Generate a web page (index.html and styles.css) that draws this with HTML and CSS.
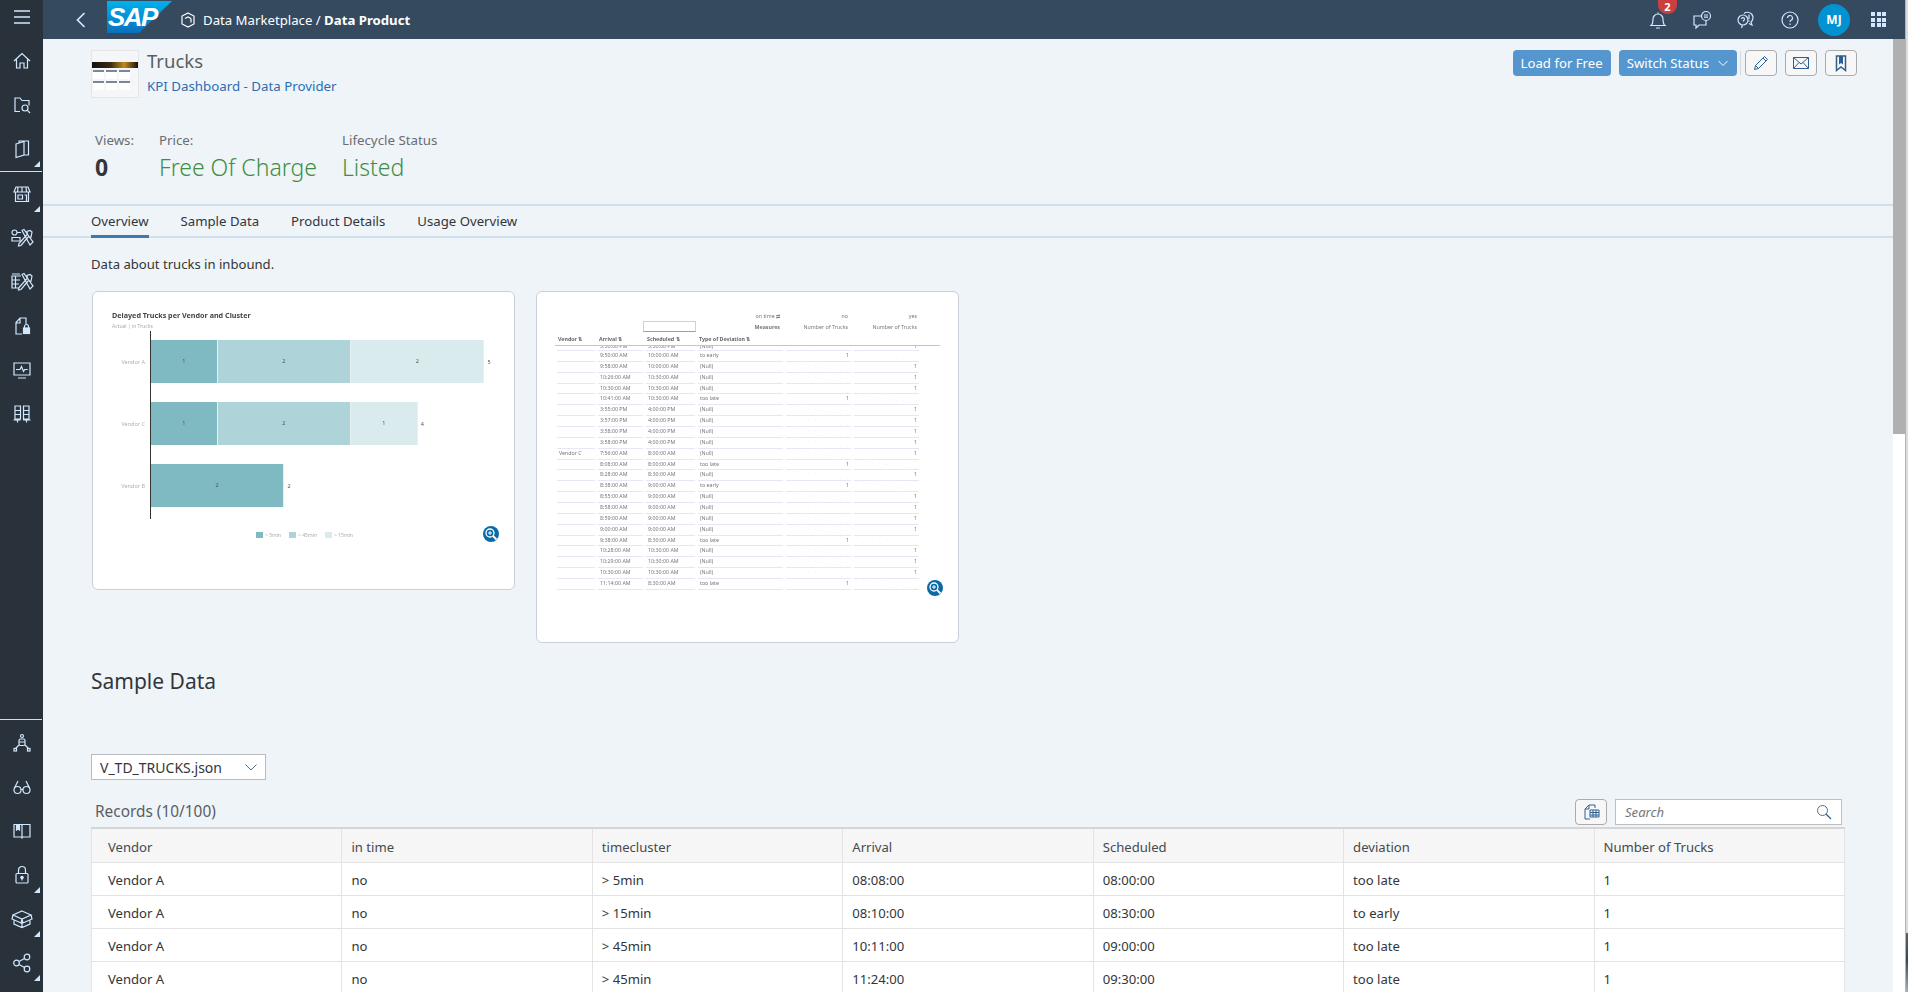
FILE: index.html
```html
<!DOCTYPE html>
<html lang="en">
<head>
    <meta charset="UTF-8">
    <meta name="viewport" content="width=device-width, initial-scale=1.0">
    <title>Data Marketplace / Data Product</title>
    <link rel="stylesheet" href="styles.css">
</head>
<body>
<div class="app">

    <!-- left navigation -->
    <nav class="side">
        <div class="side-top">
            <svg class="ico" width="20" height="20" viewBox="0 0 20 20"><path d="M2 4h16M2 10h16M2 16h16" stroke-width="1.6"/></svg>
        </div>
        <div class="side-item"><svg class="ico" width="20" height="20" viewBox="0 0 20 20"><path d="M2 10l8-7.500L18 10M4.500 8.500V17H8v-5h4v5h3.500V8.500"/></svg></div>
        <div class="side-item"><svg class="ico" width="20" height="20" viewBox="0 0 20 20"><path d="M8 16.500H3V3h5l2 2.500h7v5"/><circle cx="13" cy="13" r="3"/><path d="M15.200 15.200L18 18"/></svg></div>
        <div class="side-item more"><svg class="ico" width="20" height="20" viewBox="0 0 20 20"><path d="M4 5l8-2.500V16l-8 2.500zM7 3.500V2h9.500v14H12"/></svg></div>
        <div class="side-sep"></div>
        <div class="side-item more"><svg class="ico" width="20" height="20" viewBox="0 0 20 20"><path d="M4 3h12l2 5H2zM6 3L5.500 8M10 3v5M14 3l.5 5M3.500 8v9.500h13V8M6 11h4.500v4H6zM12.500 11h2v6.500"/></svg></div>
        <div class="side-item"><svg class="ico" width="24" height="20" viewBox="0 0 24 20"><circle cx="4.500" cy="4.500" r="2.500"/><path d="M7 4.500h4M2 9.500h8v3.500H2z"/><path d="M12 2.500l2-1 9 12.500-3 3zM22 4l-2-1.500-3 1 .5 2.500L9 15.500l-.5 2.500 2.500-.5 7.500-9 2.500.5z"/></svg></div>
        <div class="side-item"><svg class="ico" width="24" height="20" viewBox="0 0 24 20"><path d="M9 16H2V4h9M2 2h8M2 8h8M2 12h7M5.500 4v12"/><path d="M12 2.500l2-1 9 12.500-3 3zM22 4l-2-1.500-3 1 .5 2.500L9 15.500l-.5 2.500 2.500-.5 7.500-9 2.500.5z"/></svg></div>
        <div class="side-item"><svg class="ico" width="20" height="20" viewBox="0 0 20 20"><path d="M10 18H4V6.500L8 2h6v6M8 2v5H4"/><rect x="11.500" y="12" width="6" height="5.500" fill="#d1e8ff"/><path d="M12.500 12v-1.500a2 2 0 0 1 4 0V12"/></svg></div>
        <div class="side-item"><svg class="ico" width="20" height="20" viewBox="0 0 20 20"><path d="M2 3h16v12H2zM6 18h8M4 9.500h4l1.500-3 2 5 1.200-2h3"/></svg></div>
        <div class="side-item"><svg class="ico" width="20" height="20" viewBox="0 0 20 20"><path d="M3 2h5.500v13H3zM11.500 2H17v13h-5.500zM3 6.500h5.500M3 10.500h5.500M11.500 6.500H17M11.500 10.500H17M1.500 16h7M11 16h7.500M5.500 15v3.500M14.500 15v3.500"/></svg></div>

        <div class="side-sep side-bottom"></div>
        <div class="side-item"><svg class="ico" width="20" height="20" viewBox="0 0 20 20"><circle cx="10" cy="3" r="1.500"/><rect x="7" y="6" width="6" height="6.500" rx="1.500"/><path d="M7 9h6M7 12l-3.500 3.500M13 12l3.500 3.500"/><rect x="2" y="15.500" width="2.500" height="2.500"/><rect x="15.500" y="15.500" width="2.500" height="2.500"/></svg></div>
        <div class="side-item"><svg class="ico" width="20" height="20" viewBox="0 0 20 20"><circle cx="5.500" cy="13" r="3.500"/><circle cx="14.500" cy="13" r="3.500"/><path d="M9 12.500h2M2.500 11L6 4M17.500 11L14 4"/></svg></div>
        <div class="side-item"><svg class="ico" width="20" height="20" viewBox="0 0 20 20"><path d="M2 3.500h7.500l.5 1 .5-1H18V16h-7.500l-.5 1-.5-1H2zM10 4.500V17"/><path d="M4.500 3.500V9l1.500-1.200L7.500 9V3.500" fill="#d1e8ff"/></svg></div>
        <div class="side-item more"><svg class="ico" width="20" height="20" viewBox="0 0 20 20"><rect x="4" y="8.500" width="12" height="9.500" rx="1"/><path d="M6.500 8.500V5a3.500 3.500 0 0 1 7 0v3.500"/><circle cx="10" cy="12.500" r="1.200" fill="#d1e8ff"/><path d="M10 13v2.500"/></svg></div>
        <div class="side-item more"><svg class="ico" width="22" height="20" viewBox="0 0 22 20"><path d="M11 2l9 4-9 4-9-4zM11 6l0 0M2 6l-1 4 9 4 1-4 1 4 9-4-1-4M3 11.500V15l8 3.500 8-3.500v-3.500M11 10v8.500"/></svg></div>
        <div class="side-item more"><svg class="ico" width="20" height="20" viewBox="0 0 20 20"><circle cx="4.500" cy="10" r="2.800"/><circle cx="15" cy="4" r="2.800"/><circle cx="15" cy="16" r="2.800"/><path d="M7 8.500l5.500-3M7 11.500l5.500 3"/></svg></div>
    </nav>

    <div class="main">

        <!-- shell bar -->
        <header class="shell">
            <svg class="back" width="12" height="18" viewBox="0 0 12 18"><path d="M9.500 2L2.500 9l7 7" fill="none" stroke="#d1e8ff" stroke-width="1.700"/></svg>
            <svg class="logo" width="65" height="32" viewBox="0 0 65 32">
                <defs><linearGradient id="sapblue" x1="0" y1="0" x2="0" y2="1"><stop offset="0" stop-color="#00b1eb"/><stop offset="1" stop-color="#0a6fbe"/></linearGradient></defs>
                <polygon points="0,0 65,0 32,32 0,32" fill="url(#sapblue)"/>
                <text x="1" y="25" class="logo-text">SAP</text>
            </svg>
            <svg class="cube ico" width="16" height="16" viewBox="0 0 16 16"><path d="M8 1l6 3v8l-6 3-6-3V4zM5 6.500L8 5l3 1.500M11 6.500v4" stroke="#fff"/></svg>
            <div class="shell-title">Data Marketplace / <b>Data Product</b></div>
            <div class="shell-icons">
                <div class="shell-btn">
                    <svg class="ico" width="20" height="20" viewBox="0 0 20 20"><path d="M3 15.500c2-1.500 2-3 2-6.500a5 5 0 0 1 10 0c0 3.500 0 5 2 6.500zM8 18h4M10 2.500V4"/></svg>
                    <span class="badge">2</span>
                </div>
                <div class="shell-btn"><svg class="ico" width="20" height="20" viewBox="0 0 20 20"><path d="M10 6H2v9h2v3l3-3h7v-4"/><circle cx="14" cy="6" r="4.500"/><path d="M12 5h4M12 7.200h4"/></svg></div>
                <div class="shell-btn"><svg class="ico" width="20" height="20" viewBox="0 0 20 20"><circle cx="7" cy="10" r="5"/><path d="M5.500 18l1-3M5.500 9a1.500 1.500 0 1 1 2 1.500v1M8 3.500A5 5 0 1 1 15 12l1 3-3-1.500M13 4.500V9M13 10.500v1"/></svg></div>
                <div class="shell-btn"><svg class="ico" width="20" height="20" viewBox="0 0 20 20"><circle cx="10" cy="10" r="8"/><path d="M7.500 8a2.500 2.500 0 1 1 3.500 2.300c-.7.300-1 .8-1 1.700M10 13.500v1.500"/></svg></div>
                <div class="avatar">MJ</div>
                <div class="shell-btn grid-btn">
                    <span></span><span></span><span></span><span></span><span></span><span></span><span></span><span></span><span></span>
                </div>
            </div>
        </header>

        <div class="body">
            <div class="content">

                <section class="head">
                    <div class="head-top">
                        <div class="thumb">
                            <div class="thumb-band"></div>
                            <div class="thumb-cards"><i></i><i></i><i></i><i></i><i></i><i></i></div>
                        </div>
                        <div class="head-text">
                            <div class="product-name">Trucks</div>
                            <a class="product-link">KPI Dashboard - Data Provider</a>
                        </div>
                        <div class="actions">
                            <button class="btn">Load for Free</button>
                            <button class="btn">Switch Status
                                <svg width="12" height="12" viewBox="0 0 12 12"><path d="M1.500 4l4.500 4.500L10.500 4" fill="none" stroke="#fff"/></svg>
                            </button>
                            <span class="actions-sep"></span>
                            <button class="btn-icon"><svg width="18" height="18" viewBox="0 0 18 18"><path d="M2.500 15.500l1-4L12.500 2.500l3 3-9 9zM3.500 11.500l3 3M11 4l3 3" fill="none" stroke="#2f5f8f"/></svg></button>
                            <button class="btn-icon"><svg width="18" height="18" viewBox="0 0 18 18"><path d="M1.500 3.500h15v11h-15zM1.500 3.500L9 10l7.500-6.500M1.500 14.500l5.500-6M16.500 14.500L11 8.500" fill="none" stroke="#2f5f8f"/></svg></button>
                            <button class="btn-icon"><svg width="18" height="18" viewBox="0 0 18 18"><path d="M4.500 2h9v14.500L9 13l-4.500 3.500z" fill="none" stroke="#2f5f8f" stroke-width="1.500"/><path d="M7 2v8.500l2-1.500 2 1.500V2" fill="#2f5f8f"/></svg></button>
                        </div>
                    </div>
                    <div class="stats">
                        <div class="stat stat-views"><div class="stat-label">Views:</div><div class="stat-value bold">0</div></div>
                        <div class="stat stat-price"><div class="stat-label">Price:</div><div class="stat-value green">Free Of Charge</div></div>
                        <div class="stat"><div class="stat-label">Lifecycle Status</div><div class="stat-value green">Listed</div></div>
                    </div>
                </section>

                <div class="tabs">
                    <div class="tab active">Overview</div>
                    <div class="tab">Sample Data</div>
                    <div class="tab">Product Details</div>
                    <div class="tab">Usage Overview</div>
                </div>

                <section class="overview">
                    <p class="desc">Data about trucks in inbound.</p>

                    <div class="cards">
                        <!-- chart preview -->
                        <div class="card card-chart">
                            <div class="soft">
                                <div class="chart-title">Delayed Trucks per Vendor and Cluster</div>
                                <div class="chart-sub">Actual | in Trucks</div>
                                <div class="chart">
                                    <div class="chart-row">
                                        <span class="chart-label">Vendor A</span>
                                        <span class="seg s1 w1">1</span><span class="seg s2 w2">2</span><span class="seg s3 w2">2</span><span class="total">5</span>
                                    </div>
                                    <div class="chart-row">
                                        <span class="chart-label">Vendor C</span>
                                        <span class="seg s1 w1">1</span><span class="seg s2 w2">2</span><span class="seg s3 w1">1</span><span class="total">4</span>
                                    </div>
                                    <div class="chart-row">
                                        <span class="chart-label">Vendor B</span>
                                        <span class="seg s1 w2">2</span><span class="total">2</span>
                                    </div>
                                </div>
                                <div class="legend">
                                    <span><i class="s1"></i>&gt; 5min</span>
                                    <span><i class="s2"></i>&gt; 45min</span>
                                    <span><i class="s3"></i>&gt; 15min</span>
                                </div>
                            </div>
                            <div class="zoom-btn zoom-chart"><svg width="16" height="16" viewBox="0 0 16 16"><circle cx="7" cy="7" r="4" fill="none" stroke="#fff" stroke-width="1.300"/><path d="M5 7h4M7 5v4" stroke="#fff"/><path d="M10 10l3.500 3.500" stroke="#fff" stroke-width="1.800"/></svg></div>
                        </div>

                        <!-- table preview -->
                        <div class="card card-table">
                            <div class="soft">
                                <div class="mini-top">
                                    <span class="mini-input"></span>
                                    <span class="mini-hd mini-a"><i>on time ⇄</i><b>Measures</b></span>
                                    <span class="mini-hd mini-b"><i>no</i><i>Number of Trucks</i></span>
                                    <span class="mini-hd mini-c"><i>yes</i><i>Number of Trucks</i></span>
                                </div>
                                <div class="mini-row mini-head"><b>Vendor ⇅</b><b>Arrival ⇅</b><b>Scheduled ⇅</b><b>Type of Deviation ⇅</b><b></b><b></b></div>
                                <div class="mini-row cut"><span></span><span>3:50:00 PM</span><span>3:30:00 PM</span><span>(Null)</span><span class="e"></span><span class="n">1</span></div>
                                <div class="mini-row"><span></span><span>9:50:00 AM</span><span>10:00:00 AM</span><span>to early</span><span class="n">1</span><span class="e"></span></div>
                                <div class="mini-row"><span></span><span>9:58:00 AM</span><span>10:00:00 AM</span><span>(Null)</span><span class="e"></span><span class="n">1</span></div>
                                <div class="mini-row"><span></span><span>10:26:00 AM</span><span>10:30:00 AM</span><span>(Null)</span><span class="e"></span><span class="n">1</span></div>
                                <div class="mini-row"><span></span><span>10:30:00 AM</span><span>10:30:00 AM</span><span>(Null)</span><span class="e"></span><span class="n">1</span></div>
                                <div class="mini-row"><span></span><span>10:41:00 AM</span><span>10:30:00 AM</span><span>too late</span><span class="n">1</span><span class="e"></span></div>
                                <div class="mini-row"><span></span><span>3:55:00 PM</span><span>4:00:00 PM</span><span>(Null)</span><span class="e"></span><span class="n">1</span></div>
                                <div class="mini-row"><span></span><span>3:57:00 PM</span><span>4:00:00 PM</span><span>(Null)</span><span class="e"></span><span class="n">1</span></div>
                                <div class="mini-row"><span></span><span>3:58:00 PM</span><span>4:00:00 PM</span><span>(Null)</span><span class="e"></span><span class="n">1</span></div>
                                <div class="mini-row"><span></span><span>3:58:00 PM</span><span>4:00:00 PM</span><span>(Null)</span><span class="e"></span><span class="n">1</span></div>
                                <div class="mini-row"><span>Vendor C</span><span>7:56:00 AM</span><span>8:00:00 AM</span><span>(Null)</span><span class="e"></span><span class="n">1</span></div>
                                <div class="mini-row"><span></span><span>8:08:00 AM</span><span>8:00:00 AM</span><span>too late</span><span class="n">1</span><span class="e"></span></div>
                                <div class="mini-row"><span></span><span>8:28:00 AM</span><span>8:30:00 AM</span><span>(Null)</span><span class="e"></span><span class="n">1</span></div>
                                <div class="mini-row"><span></span><span>8:38:00 AM</span><span>9:00:00 AM</span><span>to early</span><span class="n">1</span><span class="e"></span></div>
                                <div class="mini-row"><span></span><span>8:55:00 AM</span><span>9:00:00 AM</span><span>(Null)</span><span class="e"></span><span class="n">1</span></div>
                                <div class="mini-row"><span></span><span>8:58:00 AM</span><span>9:00:00 AM</span><span>(Null)</span><span class="e"></span><span class="n">1</span></div>
                                <div class="mini-row"><span></span><span>8:59:00 AM</span><span>9:00:00 AM</span><span>(Null)</span><span class="e"></span><span class="n">1</span></div>
                                <div class="mini-row"><span></span><span>9:00:00 AM</span><span>9:00:00 AM</span><span>(Null)</span><span class="e"></span><span class="n">1</span></div>
                                <div class="mini-row"><span></span><span>9:38:00 AM</span><span>8:30:00 AM</span><span>too late</span><span class="n">1</span><span class="e"></span></div>
                                <div class="mini-row"><span></span><span>10:28:00 AM</span><span>10:30:00 AM</span><span>(Null)</span><span class="e"></span><span class="n">1</span></div>
                                <div class="mini-row"><span></span><span>10:29:00 AM</span><span>10:30:00 AM</span><span>(Null)</span><span class="e"></span><span class="n">1</span></div>
                                <div class="mini-row"><span></span><span>10:30:00 AM</span><span>10:30:00 AM</span><span>(Null)</span><span class="e"></span><span class="n">1</span></div>
                                <div class="mini-row"><span></span><span>11:14:00 AM</span><span>8:30:00 AM</span><span>too late</span><span class="n">1</span><span class="e"></span></div>
                            </div>
                            <div class="zoom-btn zoom-table"><svg width="16" height="16" viewBox="0 0 16 16"><circle cx="7" cy="7" r="4" fill="none" stroke="#fff" stroke-width="1.300"/><path d="M5 7h4M7 5v4" stroke="#fff"/><path d="M10 10l3.500 3.500" stroke="#fff" stroke-width="1.800"/></svg></div>
                        </div>
                    </div>
                </section>

                <section class="sample">
                    <h2 class="sample-title">Sample Data</h2>
                    <div class="select">
                        <span>V_TD_TRUCKS.json</span>
                        <svg width="14" height="14" viewBox="0 0 14 14"><path d="M1.500 4.500L7 10l5.500-5.500" fill="none" stroke="#4f6f8f"/></svg>
                    </div>
                    <div class="records-bar">
                        <div class="records-title">Records (10/100)</div>
                        <button class="btn-icon btn-small"><svg width="20" height="20" viewBox="0 0 20 20"><path d="M8 3h6v3M8 3L4 7v10h5M4 7h4V3" fill="none" stroke="#2f5f8f"/><path d="M9 8h9v7H9zM9 10.500h9M9 13h9M12 8v7M15 8v7" fill="none" stroke="#2f5f8f"/></svg></button>
                        <div class="search">
                            <span>Search</span>
                            <svg width="16" height="16" viewBox="0 0 16 16"><circle cx="6.500" cy="6.500" r="5" fill="none" stroke="#4f6f8f"/><path d="M10 10l5 5" stroke="#2f5f8f" stroke-width="1.300"/></svg>
                        </div>
                    </div>
                    <table class="records">
                        <thead>
                            <tr><th>Vendor</th><th>in time</th><th>timecluster</th><th>Arrival</th><th>Scheduled</th><th>deviation</th><th>Number of Trucks</th></tr>
                        </thead>
                        <tbody>
                            <tr><td>Vendor A</td><td>no</td><td>&gt; 5min</td><td>08:08:00</td><td>08:00:00</td><td>too late</td><td>1</td></tr>
                            <tr><td>Vendor A</td><td>no</td><td>&gt; 15min</td><td>08:10:00</td><td>08:30:00</td><td>to early</td><td>1</td></tr>
                            <tr><td>Vendor A</td><td>no</td><td>&gt; 45min</td><td>10:11:00</td><td>09:00:00</td><td>too late</td><td>1</td></tr>
                            <tr><td>Vendor A</td><td>no</td><td>&gt; 45min</td><td>11:24:00</td><td>09:30:00</td><td>too late</td><td>1</td></tr>
                        </tbody>
                    </table>
                </section>
            </div>

            <div class="scroll"><div class="scroll-thumb"></div></div>
        </div>
    </div>

    <div class="edge"></div>
</div>
</body>
</html>
```

FILE: styles.css
```css
* {
    box-sizing: border-box;
}
html, body {
    margin: 0;
    height: 100%;
    overflow: hidden;
}
body {
    background-color: #eff4f9;
    color: #32363a;
    font-family: "Noto Sans", "Open Sans", Arial, sans-serif;
    font-size: 13.100px;
}
.app {
    display: flex;
    height: 100vh;
}
.ico {
    fill: none;
    stroke: #d1e8ff;
    stroke-width: 1.200;
}

/* side nav */
.side {
    width: 43px;
    flex-shrink: 0;
    background-color: #29313a;
    display: flex;
    flex-direction: column;
    padding-bottom: 7px;
}
.side-top {
    height: 39px;
    display: flex;
    justify-content: center;
    padding-top: 7px;
}
.side-item {
    position: relative;
    height: 44px;
    display: flex;
    align-items: center;
    justify-content: center;
}
.side-item.more::after {
    content: "";
    position: absolute;
    right: 3px;
    bottom: 4px;
    border-left: 6px solid transparent;
    border-bottom: 6px solid #d1e8ff;
}
.side-sep {
    height: 1px;
    background-color: #d9dde2;
    margin-right: 1px;
}
.side-bottom {
    margin-top: auto;
    margin-bottom: 1px;
}

/* shell bar */
.main {
    flex: 1;
    min-width: 0;
    display: flex;
    flex-direction: column;
}
.shell {
    height: 39px;
    flex-shrink: 0;
    background-color: #354a5f;
    display: flex;
    align-items: center;
    padding-left: 32px;
    color: #fff;
}
.back {
    margin-right: 20px;
}
.logo {
    margin-right: 8px;
    margin-top: -5px;
}
.logo-text {
    font-family: "Liberation Sans", Arial, sans-serif;
    font-weight: bold;
    font-style: italic;
    font-size: 26px;
    letter-spacing: -1.500px;
    fill: #fff;
}
.cube {
    margin-right: 7px;
}
.shell-title {
    font-size: 13.200px;
}
.shell-icons {
    margin-left: auto;
    display: flex;
    align-items: center;
    padding-right: 14px;
}
.shell-btn {
    position: relative;
    width: 44px;
    display: flex;
    justify-content: center;
}
.badge {
    position: absolute;
    top: -10px;
    left: 22px;
    width: 19px;
    height: 14px;
    border-radius: 0 0 9px 9px;
    background-color: #c9403f;
    color: #fff;
    font-size: 11px;
    font-weight: bold;
    line-height: 14px;
    text-align: center;
}
.avatar {
    width: 32px;
    height: 32px;
    border-radius: 50%;
    background-color: #0092d1;
    font-size: 12px;
    font-weight: bold;
    line-height: 32px;
    text-align: center;
    margin-left: 6px;
    margin-right: 21px;
}
.grid-btn {
    width: 15px;
    display: grid;
    grid-template-columns: repeat(3, 4px);
    grid-auto-rows: 4px;
    gap: 1.500px;
    margin-right: 5px;
}
.grid-btn span {
    background-color: #d1e8ff;
}

/* page body */
.body {
    flex: 1;
    min-height: 0;
    display: flex;
}
.content {
    flex: 1;
    min-width: 0;
    overflow: hidden;
}
.scroll {
    width: 12px;
    flex-shrink: 0;
    background-color: #fff;
}
.scroll-thumb {
    height: 395px;
    background-color: #b0b0b0;
}
.edge {
    width: 3px;
    flex-shrink: 0;
    background: linear-gradient(#dcdcdc 933px, #5a6268 933px, #3c4650 960px, #a8b0b8 992px);
    border-left: 1px solid #b4b4b4;
}

/* object header */
.head {
    height: 165px;
    padding: 11px 36px 0 48px;
}
.head-top {
    display: flex;
    align-items: flex-start;
}
.thumb {
    width: 48px;
    height: 48px;
    border: 1px solid #e6e6e6;
    background-color: #f4f6f8;
    margin-right: 8px;
    padding-top: 11px;
}
.thumb-band {
    height: 6px;
    background: linear-gradient(90deg, #111 0, #3a2a10 40%, #c48a20 70%, #111 100%);
}
.thumb-cards {
    display: grid;
    grid-template-columns: repeat(3, 11px);
    grid-auto-rows: 9px;
    gap: 2px;
    padding: 2px 1px;
}
.thumb-cards i {
    background: linear-gradient(#7d8794 0, #7d8794 2px, #fff 2px);
}
.product-name {
    font-size: 18.500px;
    line-height: 22px;
    color: #5a5e62;
}
.product-link {
    display: block;
    margin-top: 4px;
    color: #2b6fb0;
    font-size: 13.300px;
    line-height: 20px;
}
.actions {
    margin-left: auto;
    display: flex;
    align-items: center;
    height: 26px;
}
.btn {
    height: 26px;
    padding: 0 8px;
    border: none;
    border-radius: 4px;
    background-color: #5496cd;
    color: #fff;
    font-family: inherit;
    font-size: 13.200px;
    margin-right: 8px;
    display: flex;
    align-items: center;
    gap: 8px;
    white-space: nowrap;
}
.actions-sep {
    width: 1px;
    height: 24px;
    background-color: #d5d9dd;
    margin: 0 4px 0 -5px;
}
.btn-icon {
    width: 32px;
    height: 26px;
    padding: 0;
    border: 1px solid #ababab;
    border-radius: 4px;
    background-color: #f7f7f7;
    margin-right: 8px;
    display: flex;
    align-items: center;
    justify-content: center;
}
.actions .btn-icon:last-child {
    margin-right: 0;
}
.stats {
    display: flex;
    margin-top: 33px;
    padding-left: 4px;
}
.stat-views {
    width: 64px;
}
.stat-price {
    width: 183px;
}
.stat-label {
    color: #6a6d70;
    font-size: 13.300px;
    line-height: 18px;
}
.stat-value {
    font-size: 23px;
    line-height: 36px;
    font-weight: 300;
}
.stat-value.bold {
    font-weight: 700;
}
.stat-value.green {
    color: #3f8e43;
}

/* tabs */
.tabs {
    height: 34px;
    border-top: 2px solid #cfdfee;
    border-bottom: 2px solid #cfdfee;
    padding-left: 48px;
    display: flex;
    gap: 32px;
}
.tab {
    height: 32px;
    line-height: 30px;
    font-size: 13.200px;
}
.tab.active {
    border-bottom: 3px solid #3e7ab0;
}

/* overview */
.overview {
    padding: 0 48px;
}
.desc {
    margin: 16px 0 17px;
    line-height: 20px;
}
.cards {
    display: flex;
    gap: 21px;
    align-items: flex-start;
    margin-left: 1px;
}
.card {
    position: relative;
    width: 423px;
    background-color: #fff;
    border: 1px solid #c9d0d8;
    border-radius: 6px;
    overflow: hidden;
}
.card-chart {
    height: 299px;
}
.card-table {
    height: 352px;
}
.soft {
    filter: blur(0.5px);
}
.zoom-btn {
    position: absolute;
    width: 16px;
    height: 16px;
    border-radius: 50%;
    background-color: #0a6aa8;
}
.zoom-chart {
    left: 390px;
    top: 234px;
}
.zoom-table {
    left: 390px;
    top: 288px;
}

/* chart thumbnail */
.card-chart .soft {
    padding: 18px 0 0 19px;
}
.chart-title {
    font-size: 7.200px;
    font-weight: 700;
    line-height: 10px;
    color: #444;
}
.chart-sub {
    font-size: 5px;
    line-height: 8px;
    margin-top: 2px;
    color: #aaa;
}
.chart {
    margin: 1px 0 0 38px;
    width: 360px;
    height: 188px;
    border-left: 1.500px solid #333;
    padding-top: 9px;
    display: flex;
    flex-direction: column;
    gap: 19px;
}
.chart-row {
    position: relative;
    display: flex;
    align-items: center;
    height: 43px;
    font-size: 5.500px;
    color: #555;
}
.chart-label {
    position: absolute;
    right: 100%;
    width: 50px;
    padding-right: 6px;
    text-align: right;
    color: #b0b0b0;
}
.seg {
    height: 43px;
    line-height: 43px;
    text-align: center;
    border-right: 1px solid #e4f0f2;
}
.w1 {
    width: 66.700px;
}
.w2 {
    width: 133.400px;
}
.s1 {
    background-color: #7fb9c1;
}
.s2 {
    background-color: #aed3d8;
}
.s3 {
    background-color: #d9ebed;
}
.total {
    margin-left: 3px;
}
.legend {
    display: flex;
    gap: 8px;
    margin: 12px 0 0 144px;
    font-size: 5px;
    line-height: 8px;
    color: #aaa;
}
.legend span {
    display: flex;
    align-items: center;
    gap: 2px;
}
.legend i {
    width: 7px;
    height: 6px;
}

/* table thumbnail */
.card-table .soft {
    padding: 24px 0 0 20px;
    font-size: 5.300px;
    color: #777;
}
.mini-top {
    position: relative;
    height: 19px;
}
.mini-input {
    position: absolute;
    left: 86px;
    top: 5px;
    width: 53px;
    height: 11px;
    border: 1px solid #c3d4e6;
    border-bottom-color: #7fa6cc;
}
.mini-hd {
    position: absolute;
    top: -4px;
    display: flex;
    flex-direction: column;
    align-items: flex-end;
    gap: 3px;
    line-height: 8px;
}
.mini-hd i {
    font-style: normal;
}
.mini-a {
    width: 60px;
    left: 163px;
}
.mini-b {
    width: 60px;
    left: 231px;
}
.mini-c {
    width: 60px;
    left: 300px;
}
.mini-row {
    display: grid;
    grid-template-columns: 38px 45px 49px 85px 65px 65px;
    column-gap: 3px;
    height: 10.870px;
    line-height: 9.500px;
    width: 383px;
}
.mini-row span {
    border-bottom: 1px solid #e8e6f6;
    padding-left: 2px;
    white-space: nowrap;
    overflow: hidden;
}
.mini-row span.n {
    text-align: right;
    padding-right: 2px;
}
.mini-row span.e {
    background: linear-gradient(to top right, transparent 49.500%, #ebebf2 50%, transparent 50.500%);
}
.mini-head {
    height: 11px;
    border-bottom: 1px solid #c4c4c4;
    width: 385px;
    margin-left: -2px;
}
.mini-head b {
    padding-left: 3px;
    white-space: nowrap;
    color: #666;
}
.mini-row.cut {
    height: 5px;
    overflow: hidden;
    line-height: 0;
}

/* sample data */
.sample {
    padding: 0 48px;
}
.sample-title {
    margin: 23px 0 0;
    font-size: 21px;
    font-weight: 400;
    line-height: 30px;
    color: #32363a;
}
.select {
    width: 175px;
    height: 26px;
    margin-top: 58px;
    padding: 0 7px 0 8px;
    border: 1px solid #b8bcc0;
    background-color: #fff;
    display: flex;
    align-items: center;
    justify-content: space-between;
    font-size: 14px;
}
.records-bar {
    display: flex;
    align-items: center;
    height: 26px;
    margin-top: 19px;
    padding-left: 4px;
    padding-right: 3px;
}
.records-title {
    margin-right: auto;
    margin-top: -2px;
    font-size: 15.400px;
    color: #5a5e62;
}
.btn-small {
    margin-right: 8px;
}
.search {
    width: 227px;
    height: 26px;
    padding: 0 9px;
    border: 1px solid #bfbfbf;
    background-color: #fff;
    display: flex;
    align-items: center;
    justify-content: space-between;
    color: #74777a;
    font-style: italic;
}
.records {
    width: 1754px;
    margin-top: 2px;
    table-layout: fixed;
    border-collapse: collapse;
    background-color: #fff;
    border-top: 2px solid #d5d5d5;
}
.records th {
    height: 34px;
    padding: 3px 9px 0;
    background-color: #f6f6f6;
    font-weight: 400;
    text-align: left;
    border: 1px solid #e3e3e3;
    color: #454a4f;
}
.records td {
    height: 33px;
    padding: 3px 9px 0;
    border: 1px solid #e3e3e3;
}
.records th:first-child,
.records td:first-child {
    padding-left: 16px;
}
```
